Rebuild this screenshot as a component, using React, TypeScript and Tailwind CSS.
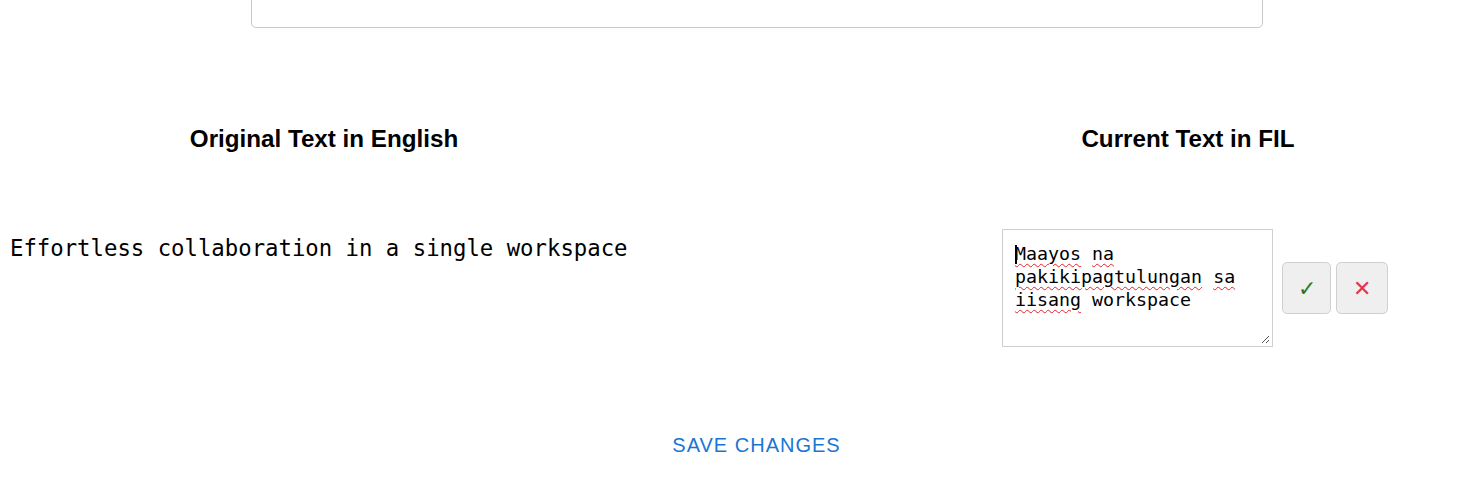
import React from "react";

const SANS = "font-['Liberation_Sans',Arial,sans-serif]";
const MONO = "font-['DejaVu_Sans_Mono','Liberation_Mono',monospace]";

// spell-checker squiggle, like the browser draws under unknown words
function Misspelled({ children }: { children: React.ReactNode }) {
  return (
    <span className="underline decoration-wavy decoration-[#e0242b] decoration-1 underline-offset-[3px]">
      {children}
    </span>
  );
}

function ResizeGrip() {
  return (
    <svg className="absolute right-[2px] bottom-[2px]" width="10" height="10" viewBox="0 0 10 10" aria-hidden>
      <path d="M9 2L2 9M9 6L6 9" stroke="#555" strokeWidth="1" fill="none" />
    </svg>
  );
}

function TranslationEditor() {
  return (
    <div className="flex items-center">
      <div
        className={`relative w-[271px] h-[118px] border border-[#cfcfcf] bg-white pt-[12px] pl-[12px] pr-[12px] text-[18.3px] leading-[23px] text-black ${MONO}`}
      >
        <span className="inline-block w-[2px] h-[19px] bg-black align-[-4px] -mr-[2px]" />
        <Misspelled>Maayos</Misspelled> <Misspelled>na</Misspelled>{" "}
        <Misspelled>pakikipagtulungan</Misspelled> <Misspelled>sa</Misspelled>{" "}
        <Misspelled>iisang</Misspelled> workspace
        <ResizeGrip />
      </div>
      <button className="ml-[9px] w-[49px] h-[52px] rounded-[5px] border border-[#d0d0d0] bg-[#efefef] text-[#1f7a1f] text-[22px] font-light flex items-center justify-center">
        ✓
      </button>
      <button className="ml-[5px] w-[52px] h-[52px] rounded-[5px] border border-[#d0d0d0] bg-[#efefef] text-[#e8334f] text-[22px] font-light flex items-center justify-center">
        ✕
      </button>
    </div>
  );
}

export default function App() {
  return (
    <div className="w-full overflow-hidden bg-white">
      <div className={`w-[1513px] ${SANS}`}>
        <div className="mx-auto w-[1012px] h-[40px] -mt-[12px] border border-[#c8c8c8] rounded-[5px]" />

        <div className="grid grid-cols-[648px_257px_566px] mt-[98px]">
          <h2 className="text-center text-[24.2px] leading-[26px] font-bold text-black">Original Text in English</h2>
          <div />
          <h2 className="text-center text-[24.2px] leading-[26px] font-bold text-black">Current Text in FIL</h2>
        </div>

        <div className="grid grid-cols-[648px_257px_566px] mt-[77px]">
          <p className={`pl-[10px] pt-[6px] text-[22.3px] leading-[26px] text-black whitespace-nowrap ${MONO}`}>
            Effortless collaboration in a single workspace
          </p>
          <div />
          <div className="pl-[97px]">
            <TranslationEditor />
          </div>
        </div>

        <div className="flex justify-center mt-[86px] pb-[40px]">
          <button className="text-[20px] leading-[24px] tracking-[1px] text-[#1976d2] uppercase">
            Save changes
          </button>
        </div>
      </div>
    </div>
  );
}
